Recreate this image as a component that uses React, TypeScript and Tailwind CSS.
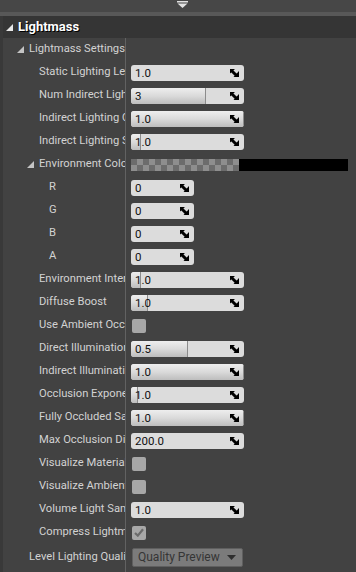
import React from 'react';

type Field = {
  label: string;
  kind: 'num' | 'small' | 'check' | 'color' | 'combo' | 'group';
  value?: string;
  fill?: number;
  checked?: boolean;
  pad: string;
  expander?: boolean;
};

const rows: Field[] = [
  { label: 'Lightmass Settings', kind: 'group', pad: 'pl-[14px]', expander: true },
  { label: 'Static Lighting Level Scale', kind: 'num', value: '1.0', pad: 'pl-[36px]' },
  { label: 'Num Indirect Lighting Bounces', kind: 'num', value: '3', fill: 0.66, pad: 'pl-[36px]' },
  { label: 'Indirect Lighting Quality', kind: 'num', value: '1.0', fill: 1, pad: 'pl-[36px]' },
  { label: 'Indirect Lighting Smoothness', kind: 'num', value: '1.0', fill: 0.09, pad: 'pl-[36px]' },
  { label: 'Environment Color', kind: 'color', pad: 'pl-[24px]', expander: true },
  { label: 'R', kind: 'small', value: '0', pad: 'pl-[46px]' },
  { label: 'G', kind: 'small', value: '0', pad: 'pl-[46px]' },
  { label: 'B', kind: 'small', value: '0', pad: 'pl-[46px]' },
  { label: 'A', kind: 'small', value: '0', pad: 'pl-[46px]' },
  { label: 'Environment Intensity', kind: 'num', value: '1.0', fill: 0.09, pad: 'pl-[36px]' },
  { label: 'Diffuse Boost', kind: 'num', value: '1.0', fill: 0.15, pad: 'pl-[36px]' },
  { label: 'Use Ambient Occlusion', kind: 'check', pad: 'pl-[36px]' },
  { label: 'Direct Illumination Occlusion Fraction', kind: 'num', value: '0.5', fill: 0.5, pad: 'pl-[36px]' },
  { label: 'Indirect Illumination Occlusion Fraction', kind: 'num', value: '1.0', fill: 1, pad: 'pl-[36px]' },
  { label: 'Occlusion Exponent', kind: 'num', value: '1.0', fill: 0.06, pad: 'pl-[36px]' },
  { label: 'Fully Occluded Samples Fraction', kind: 'num', value: '1.0', fill: 1, pad: 'pl-[36px]' },
  { label: 'Max Occlusion Distance', kind: 'num', value: '200.0', pad: 'pl-[36px]' },
  { label: 'Visualize Material Diffuse', kind: 'check', pad: 'pl-[36px]' },
  { label: 'Visualize Ambient Occlusion', kind: 'check', pad: 'pl-[36px]' },
  { label: 'Volume Light Sample Placement Scale', kind: 'num', value: '1.0', pad: 'pl-[36px]' },
  { label: 'Compress Lightmaps', kind: 'check', checked: true, pad: 'pl-[36px]' },
  { label: 'Level Lighting Quality', kind: 'combo', value: 'Quality Preview', pad: 'pl-[26px]' },
];

const Expander = ({ color }: { color: string }) => (
  <svg width="7" height="7" viewBox="0 0 7 7" className="shrink-0">
    <path d="M7 0V7H0Z" fill={color} />
  </svg>
);

const Spinner = () => (
  <svg width="9" height="8" viewBox="0 0 9 8" className="absolute right-[5px] top-[4px]">
    <path d="M0 0H5L0 4.5Z" fill="#000" />
    <path d="M9 2V8H3.5Z" fill="#000" />
    <path d="M1.2 1.2L7 7" stroke="#000" strokeWidth="3" />
  </svg>
);

const NumBox = ({ value, fill = 0, width }: { value: string; fill?: number; width: number }) => (
  <div
    className={`relative flex items-center h-[16px] rounded-[3px] bg-[#dcdcdc] overflow-hidden ${
      width === 113 ? 'w-[113px]' : 'w-[63px]'
    }`}
  >
    {fill > 0 && (
      <div
        className="absolute inset-y-0 left-0 bg-gradient-to-b from-[#eeeeee] via-[#dadada] to-[#bdbdbd] border-r border-[#8c8c8c]"
        style={{ width: Math.round(fill * width) }}
      />
    )}
    <span className="relative pl-[4px] text-[11.5px] leading-[16px] text-[#101010]">{value}</span>
    <Spinner />
  </div>
);

const CheckBox = ({ checked }: { checked?: boolean }) => (
  <div className="ml-[1px] w-[14px] h-[14px] rounded-[2px] bg-[#a7a7a7] flex items-center justify-center">
    {checked && (
      <svg width="10" height="9" viewBox="0 0 10 9">
        <path d="M1 5L3.8 7.6L9 1.2" stroke="#6a6a6a" strokeWidth="2.2" fill="none" />
      </svg>
    )}
  </div>
);

const Value = ({ f }: { f: Field }) => {
  if (f.kind === 'num') return <NumBox value={f.value!} fill={f.fill} width={113} />;
  if (f.kind === 'small') return <NumBox value={f.value!} width={63} />;
  if (f.kind === 'check') return <CheckBox checked={f.checked} />;
  if (f.kind === 'color')
    return (
      <div className="flex h-[12px] w-[217px]">
        <div className="w-[108px] h-full bg-[conic-gradient(#8e8e8e_25%,#6c6c6c_0_50%,#8e8e8e_0_75%,#6c6c6c_0)] bg-[length:12px_12px]" />
        <div className="flex-1 h-full bg-black" />
      </div>
    );
  if (f.kind === 'combo')
    return (
      <div className="ml-[1px] w-[111px] h-[19px] bg-[#7b7b7b] border border-[#5f5f5f] rounded-[2px] flex items-center justify-between pl-[5px] pr-[6px]">
        <span className="text-[12px] leading-[17px] text-[#353535]">{f.value}</span>
        <svg width="9" height="5" viewBox="0 0 9 5">
          <path d="M0 0H9L4.5 5Z" fill="#2e2e2e" />
        </svg>
      </div>
    );
  return null;
};

export default function App() {
  return (
    <div className="w-[356px] h-[572px] overflow-hidden bg-[#474747] font-['Roboto','Liberation_Sans',sans-serif]">
      <div className="h-[12px] pl-[177px] pt-[1px]">
        <svg width="11" height="7" viewBox="0 0 11 7" className="block">
          <rect x="0" y="0" width="11" height="1.5" fill="#e2e2e2" />
          <path d="M0.5 2.5H10.5L5.5 7Z" fill="#e2e2e2" />
        </svg>
      </div>
      <div className="h-[4px] bg-[#585858]" />
      <div className="pl-[3px] bg-[#393939]">
        <div className="h-[22px] bg-[#353535] flex items-center gap-[5px] pl-[3px]">
          <Expander color="#e8e8e8" />
          <span className="text-[13px] font-bold text-white [text-shadow:1px_1px_0_#000]">Lightmass</span>
        </div>
        <div className="bg-[#424242]">
          {rows.map((f, i) => (
            <div key={i} className={`flex ${f.kind === 'combo' ? 'h-[26px]' : 'h-[23px]'}`}>
              <div
                className={`w-[123px] shrink-0 overflow-hidden whitespace-nowrap flex items-center gap-[5px] border-r border-[#626262] ${f.pad}`}
              >
                {f.expander && <Expander color="#c4c4c4" />}
                <span className="text-[11.2px] text-[#d2d2d2]">{f.label}</span>
              </div>
              <div className="flex-1 flex items-center pl-[5px]">
                <Value f={f} />
              </div>
            </div>
          ))}
          <div className="h-[10px] flex">
            <div className="w-[123px] border-r border-[#626262]" />
          </div>
        </div>
      </div>
    </div>
  );
}
